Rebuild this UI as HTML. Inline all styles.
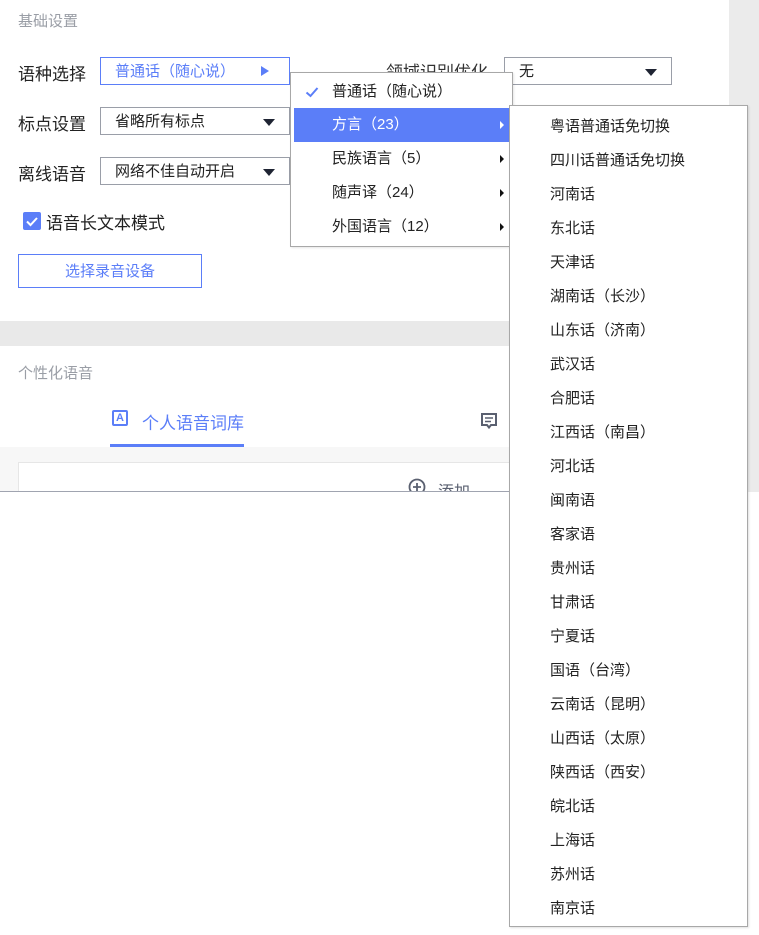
<!DOCTYPE html>
<html><head><meta charset="utf-8"><style>
*{margin:0;padding:0;box-sizing:border-box}
body{width:759px;height:935px;background:#fff;position:relative;overflow:hidden;font-family:"Liberation Sans","Noto Sans CJK SC",sans-serif;color:#222;font-size:16px}
.a{position:absolute;white-space:nowrap}
.sel{position:absolute;height:28px;border:1px solid #9a9ea8;background:#fff;font-size:15px;line-height:28px;padding-left:14px}
.tri{position:absolute;right:14px;top:11px;width:0;height:0;border-left:6px solid transparent;border-right:6px solid transparent;border-top:7px solid #1f2433}
.mi{position:absolute;left:3px;width:216px;height:34px;line-height:34px;font-size:15px;padding-left:38px;color:#222}
.mi .ar{position:absolute;right:6px;top:13px;width:0;height:0;border-top:4px solid transparent;border-bottom:4px solid transparent;border-left:4px solid #111}
.si{position:absolute;left:40px;font-size:15px;line-height:34px;height:34px}
</style></head><body>
<div class="a" style="left:729px;top:0;width:30px;height:492px;background:#ebebeb"></div>
<div class="a" style="left:18px;top:10px;font-size:15px;color:#9a9ea6">基础设置</div>
<div class="a" style="left:18px;top:60px;font-size:17px">语种选择</div>
<div class="sel" style="left:100px;top:57px;width:190px;border-color:#5b7ef8;color:#5b7ef8">普通话（随心说）<div style="position:absolute;right:20px;top:8px;border-top:5px solid transparent;border-bottom:5px solid transparent;border-left:8px solid #5b7ef8"></div></div>
<div class="a" style="left:386px;top:58px;font-size:17px;color:#333;height:14px;overflow:hidden">领域识别优化</div>
<div class="sel" style="left:504px;top:57px;width:168px">无<div class="tri"></div></div>
<div class="a" style="left:18px;top:110px;font-size:17px">标点设置</div>
<div class="sel" style="left:100px;top:107px;width:190px">省略所有标点<div class="tri"></div></div>
<div class="a" style="left:18px;top:160px;font-size:17px">离线语音</div>
<div class="sel" style="left:100px;top:157px;width:190px">网络不佳自动开启<div class="tri"></div></div>
<div class="a" style="left:23px;top:212px;width:18px;height:18px;background:#5b7ef8;border-radius:2px"><svg width="18" height="18"><path d="M4 9.5l3.5 3.5 6.5-7" stroke="#fff" stroke-width="2" fill="none"/></svg></div>
<div class="a" style="left:46px;top:209px;font-size:17px">语音长文本模式</div>
<div class="a" style="left:18px;top:254px;width:184px;height:34px;border:1px solid #5b7ef8;color:#5b7ef8;font-size:15px;text-align:center;line-height:34px">选择录音设备</div>
<div class="a" style="left:0;top:321px;width:729px;height:25px;background:#e9e9e9"></div>
<div class="a" style="left:18px;top:362px;font-size:15px;color:#9a9ea6">个性化语音</div>
<div class="a" style="left:112px;top:410px;width:16px;height:16px;border:2px solid #5b7ef8;border-radius:2px;font-size:11px;font-weight:bold;color:#5b7ef8;text-align:center;line-height:12px">A</div>
<div class="a" style="left:142px;top:409px;font-size:17px;color:#5b7ef8">个人语音词库</div>
<div class="a" style="left:110px;top:444px;width:134px;height:3px;background:#5b7ef8"></div>
<svg class="a" style="left:480px;top:412px" width="18" height="20"><path d="M2 2h14v11h-5l-2 2.5-2-2.5H2z" fill="none" stroke="#5a6070" stroke-width="2"/><path d="M5 6h8M5 9.5h6" stroke="#5a6070" stroke-width="1.6"/></svg>
<div class="a" style="left:0;top:447px;width:729px;height:45px;background:#f7f7f7"></div>
<div class="a" style="left:18px;top:462px;width:711px;height:30px;background:#fff;border:1px solid #e6e6e6;border-bottom:none"></div>
<svg class="a" style="left:408px;top:478px" width="18" height="14"><circle cx="9" cy="9" r="7.5" fill="none" stroke="#5a6070" stroke-width="1.8"/><path d="M9 5v8M5 9h8" stroke="#5a6070" stroke-width="1.8"/></svg>
<div class="a" style="left:438px;top:478px;font-size:16px;color:#5a6070;height:14px;overflow:hidden">添加</div>
<div class="a" style="left:0;top:491px;width:747px;height:1px;background:#a0a4b0"></div>
<div class="a" style="left:290px;top:72px;width:223px;height:175px;background:#fff;border:1px solid #a8a8a8;box-shadow:1px 1px 2px rgba(0,0,0,.1)">
<svg class="a" style="left:14px;top:13px" width="14" height="12"><path d="M1.5 6.5l4 3.5 7-8" fill="none" stroke="#5b7ef8" stroke-width="2"/></svg>
<div class="mi" style="top:2px">普通话（随心说）</div>
<div class="mi" style="top:35px;background:#5b7ef8;color:#fff">方言（23）<span class="ar" style="border-left-color:#fff"></span></div>
<div class="mi" style="top:69px">民族语言（5）<span class="ar"></span></div>
<div class="mi" style="top:103px">随声译（24）<span class="ar"></span></div>
<div class="mi" style="top:137px">外国语言（12）<span class="ar"></span></div>
</div>
<div class="a" style="left:509px;top:105px;width:239px;height:822px;background:#fff;border:1px solid #a8a8a8;box-shadow:1px 1px 2px rgba(0,0,0,.12)">
<div class="si" style="top:4px">粤语普通话免切换</div>
<div class="si" style="top:38px">四川话普通话免切换</div>
<div class="si" style="top:72px">河南话</div>
<div class="si" style="top:106px">东北话</div>
<div class="si" style="top:140px">天津话</div>
<div class="si" style="top:174px">湖南话（长沙）</div>
<div class="si" style="top:208px">山东话（济南）</div>
<div class="si" style="top:242px">武汉话</div>
<div class="si" style="top:276px">合肥话</div>
<div class="si" style="top:310px">江西话（南昌）</div>
<div class="si" style="top:344px">河北话</div>
<div class="si" style="top:378px">闽南语</div>
<div class="si" style="top:412px">客家语</div>
<div class="si" style="top:446px">贵州话</div>
<div class="si" style="top:480px">甘肃话</div>
<div class="si" style="top:514px">宁夏话</div>
<div class="si" style="top:548px">国语（台湾）</div>
<div class="si" style="top:582px">云南话（昆明）</div>
<div class="si" style="top:616px">山西话（太原）</div>
<div class="si" style="top:650px">陕西话（西安）</div>
<div class="si" style="top:684px">皖北话</div>
<div class="si" style="top:718px">上海话</div>
<div class="si" style="top:752px">苏州话</div>
<div class="si" style="top:786px">南京话</div>
</div>
</body></html>
